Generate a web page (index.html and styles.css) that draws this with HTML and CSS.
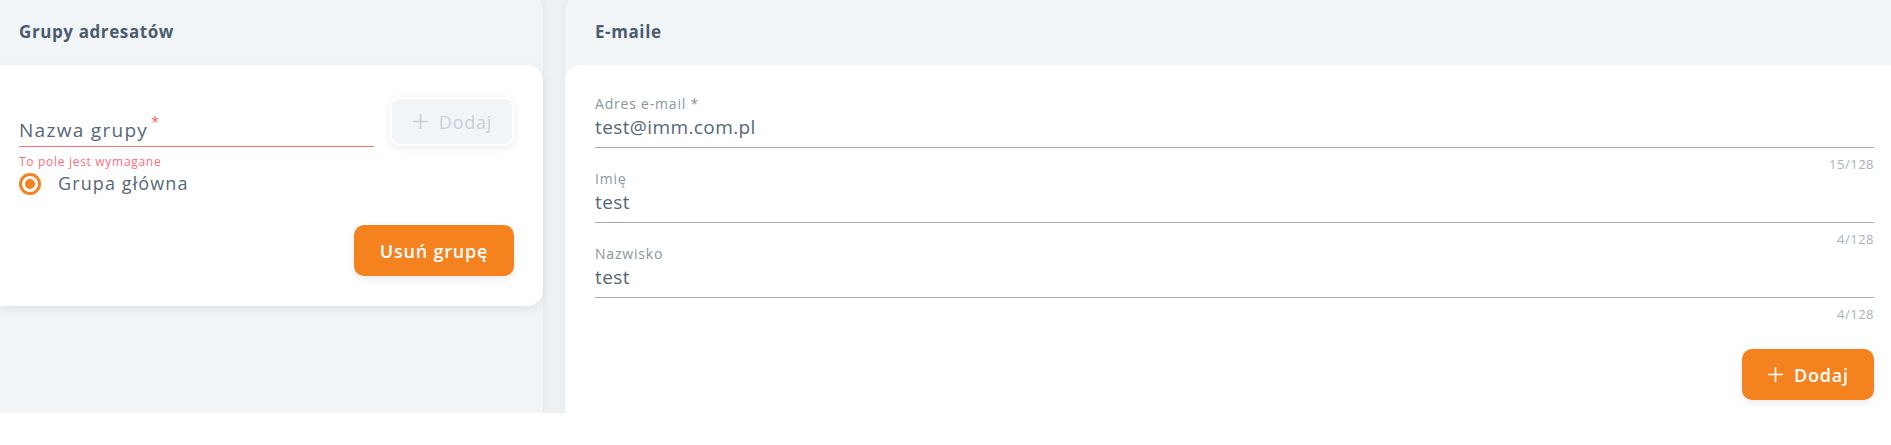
FILE: index.html
```html
<!DOCTYPE html>
<html lang="pl">
<head>
    <meta charset="UTF-8">
    <meta name="viewport" content="width=device-width, initial-scale=1.0">
    <title>Grupy adresatów</title>
    <link rel="stylesheet" href="styles.css">
</head>
<body>

<div class="layout">

  <!-- Grupy -->
  <section class="panel panel-groups">
    <div class="panel-head">Grupy adresatów</div>
    <div class="card card-groups">
      <div class="group-row">
        <div class="group-field">
          <div class="group-input">Nazwa grupy <span class="req">*</span></div>
          <div class="group-error">To pole jest wymagane</div>
        </div>
        <button class="btn btn-disabled" disabled>
          <svg class="plus" viewBox="0 0 16 16"><path d="M8 1v14M1 8h14"/></svg>
          Dodaj
        </button>
      </div>
      <label class="radio">
        <span class="radio-dot"></span>
        <span class="radio-text">Grupa główna</span>
      </label>
      <div class="card-actions">
        <button class="btn btn-orange">Usuń grupę</button>
      </div>
    </div>
  </section>

  <!-- E-maile -->
  <section class="panel panel-emails">
    <div class="panel-head">E-maile</div>
    <div class="card card-emails">
      <div class="field">
        <div class="field-label">Adres e-mail *</div>
        <div class="field-value">test@imm.com.pl</div>
        <div class="field-count">15/128</div>
      </div>
      <div class="field">
        <div class="field-label">Imię</div>
        <div class="field-value">test</div>
        <div class="field-count">4/128</div>
      </div>
      <div class="field">
        <div class="field-label">Nazwisko</div>
        <div class="field-value">test</div>
        <div class="field-count">4/128</div>
      </div>
      <div class="card-actions">
        <button class="btn btn-orange btn-add">
          <svg class="plus" viewBox="0 0 16 16"><path d="M8 1v14M1 8h14"/></svg>
          Dodaj
        </button>
      </div>
    </div>
  </section>

</div>

</body>
</html>
```

FILE: styles.css
```css
/* Ogólne */
body {
    margin: 0;
    background: #fff;
    font-family: "Open Sans", "Noto Sans", sans-serif;
    color: #566779;
    overflow: hidden;
}

.layout {
    display: flex;
    gap: 22px;
    height: 417px;
    margin-top: -4px;
    background: #eef1f4;
}

.panel {
    background: #f2f5f8;
    border-radius: 0 14px 0 0;
    box-shadow: 0 0 6px rgba(40, 60, 90, 0.06);
    display: flex;
    flex-direction: column;
}

.panel-groups {
    width: 543px;
    flex-shrink: 0;
}

.panel-emails {
    flex: 1;
    border-radius: 14px 0 0 0;
}

.panel-head {
    height: 69px;
    box-sizing: border-box;
    display: flex;
    align-items: center;
    padding-top: 1px;
    font-weight: 700;
    font-size: 17px;
    letter-spacing: 0.6px;
    color: #4b5c6f;
}

.panel-groups .panel-head {
    padding-left: 19px;
}

.panel-emails .panel-head {
    padding-left: 30px;
}

.card {
    background: #fff;
}

/* Karta grup */
.card-groups {
    border-radius: 0 16px 16px 0;
    padding: 32px 29px 30px 19px;
    box-shadow: 0 4px 10px rgba(40, 60, 90, 0.09);
}

.group-row {
    display: flex;
    gap: 16px;
    align-items: flex-start;
}

.group-field {
    flex: 1;
}

.group-input {
    height: 50px;
    box-sizing: border-box;
    display: flex;
    align-items: flex-end;
    padding-bottom: 4px;
    font-size: 19px;
    line-height: 24px;
    letter-spacing: 1.3px;
    border-bottom: 1.5px solid #f77272;
}

.req {
    color: #f06262;
    font-size: 14px;
    align-self: flex-start;
    margin-top: 13px;
    margin-left: 3px;
}

.group-error {
    margin-top: 8px;
    font-size: 12px;
    line-height: 14px;
    letter-spacing: 0.7px;
    color: #ff6d7b;
}

.radio {
    display: flex;
    align-items: center;
    gap: 17px;
    margin-top: 4px;
    height: 22px;
}

.radio-dot {
    width: 22px;
    height: 22px;
    box-sizing: border-box;
    border: 3px solid #f4821f;
    border-radius: 50%;
    display: flex;
    align-items: center;
    justify-content: center;
}

.radio-dot::after {
    content: "";
    width: 10px;
    height: 10px;
    border-radius: 50%;
    background: #f4821f;
}

.radio-text {
    font-size: 18px;
    line-height: 22px;
    letter-spacing: 1.1px;
    padding-bottom: 3px;
}

.card-actions {
    display: flex;
    justify-content: flex-end;
}

.card-groups .card-actions {
    margin-top: 30px;
}

/* Przyciski */
.btn {
    display: flex;
    align-items: center;
    justify-content: center;
    gap: 10px;
    border: none;
    border-radius: 10px;
    font-family: inherit;
    font-size: 18px;
    font-weight: 600;
    letter-spacing: 0.8px;
    cursor: pointer;
}

.btn-orange {
    width: 160px;
    height: 51px;
    background: #f4821f;
    color: #fff;
    box-shadow: 0 3px 8px rgba(0, 0, 0, 0.08);
}

.btn-disabled {
    width: 124px;
    height: 49px;
    background: #f1f5f8;
    color: #c9d0d9;
    border: 2px solid #fff;
    box-shadow: 0 2px 8px rgba(40, 60, 90, 0.1);
    font-weight: 500;
    cursor: default;
}

.btn-add {
    width: 132px;
}

.plus {
    width: 17px;
    height: 17px;
    fill: none;
    stroke: currentColor;
    stroke-width: 1.6;
}

/* Karta e-maili */
.card-emails {
    flex: 1;
    border-radius: 16px 0 0 0;
    padding: 31px 17px 0 30px;
}

.field-label {
    font-size: 14px;
    line-height: 16px;
    letter-spacing: 0.8px;
    color: #8a96a2;
}

.field-value {
    margin-top: 2px;
    padding-bottom: 7px;
    font-size: 19px;
    line-height: 26px;
    letter-spacing: 0.4px;
    border-bottom: 1.5px solid #ababab;
}

.field-count {
    margin-top: 9px;
    font-size: 13px;
    line-height: 14px;
    letter-spacing: 0.5px;
    text-align: right;
    color: #a8b2bc;
}

.card-emails .card-actions {
    margin-top: 28px;
}
```
